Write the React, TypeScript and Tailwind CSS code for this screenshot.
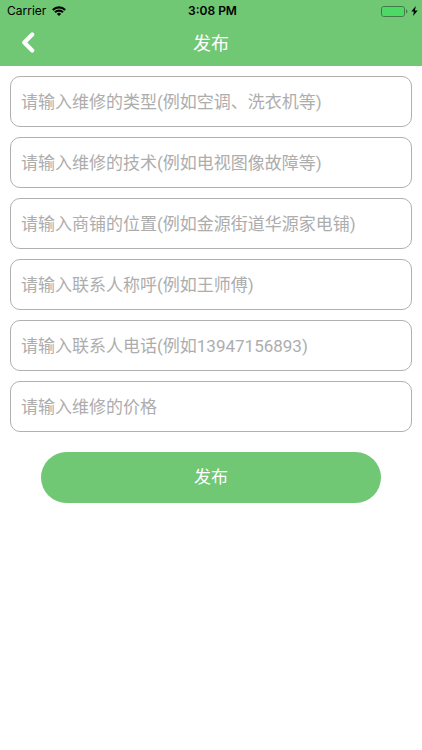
import { useState } from "react";

const fields = [
  { name: "type", label: "维修的类型", placeholder: "请输入维修的类型(例如空调、洗衣机等)" },
  { name: "skill", label: "维修的技术", placeholder: "请输入维修的技术(例如电视图像故障等)" },
  { name: "address", label: "商铺的位置", placeholder: "请输入商铺的位置(例如金源街道华源家电铺)" },
  { name: "contact", label: "联系人称呼", placeholder: "请输入联系人称呼(例如王师傅)" },
  { name: "phone", label: "联系人电话", placeholder: "请输入联系人电话(例如13947156893)" },
  { name: "price", label: "维修的价格", placeholder: "请输入维修的价格" },
];

function StatusBar() {
  return (
    <div className="grid h-[22px] grid-cols-3 items-center pl-[7px] pr-1 font-['Inter',sans-serif] text-[12px] leading-5 text-black">
      <div className="flex items-center gap-1.5">
        <span>Carrier</span>
        <svg viewBox="0 0 14 10" className="h-[10px] w-[14px]" fill="none" stroke="currentColor" strokeWidth="2.1">
          <path d="M0.8 3.9a8.8 8.8 0 0 1 12.4 0" />
          <path d="M3 6.3a5.7 5.7 0 0 1 8 0" />
          <path d="M7 10 4.9 7.9a3 3 0 0 1 4.2 0z" fill="currentColor" stroke="none" />
        </svg>
      </div>
      <span className="text-center font-semibold">3:08 PM</span>
      <div className="flex items-center justify-end gap-[3px]">
        <svg viewBox="0 0 27 11" className="h-[11px] w-[27px]">
          <rect x="0.5" y="0.5" width="23" height="10" rx="2.4" fill="none" stroke="#447a47" />
          <rect x="1.3" y="1.3" width="21.4" height="8.4" rx="1.5" fill="#4cd964" />
          <path d="M25 3.6v3.8c.9-.3 1.4-1 1.4-1.9S25.900 3.900 25 3.600z" fill="#447a47" />
        </svg>
        <svg viewBox="0 0 7 10" className="h-[10px] w-[7px]" fill="currentColor">
          <path d="M4.8 0 .3 5.6h2.6L2.100 10l4.600-5.600H3.900z" />
        </svg>
      </div>
    </div>
  );
}

export default function App() {
  const [values, setValues] = useState<Record<string, string>>({});

  return (
    <div className="min-h-screen bg-white font-['Roboto','Noto_Sans_CJK_SC',sans-serif]">
      <header className="bg-[#70c774]">
        <StatusBar />
        <div className="grid h-11 grid-cols-3 items-center px-5 pb-[2px]">
          <button type="button" aria-label="返回" className="flex size-6 items-center text-white">
            <svg viewBox="0 0 16 22" className="h-[22px] w-4" fill="none" stroke="currentColor" strokeWidth="4.2" strokeLinecap="round" strokeLinejoin="round">
              <path d="M12.200 2.600 4.300 10.600l7.900 8" />
            </svg>
          </button>
          <h1 className="text-center text-[18px] text-white">发布</h1>
        </div>
      </header>

      <form className="px-[10px] pt-[10px]" onSubmit={(e) => e.preventDefault()}>
        <div className="flex flex-col gap-[10px]">
          {fields.map((field) => (
            <input
              key={field.name}
              name={field.name}
              aria-label={field.label}
              placeholder={field.placeholder}
              value={values[field.name] || ""}
              onChange={(e) => setValues({ ...values, [field.name]: e.target.value })}
              className="h-[51px] w-full rounded-[10px] border border-[#b0b0b2] px-[10px] text-[17px] text-gray-800 outline-none placeholder:text-[#adadad]"
            />
          ))}
        </div>
        <div className="px-[31px] pt-5">
          <button type="submit" className="h-[51px] w-full rounded-full bg-[#70c774] text-[17px] text-white">
            发布
          </button>
        </div>
      </form>
    </div>
  );
}
